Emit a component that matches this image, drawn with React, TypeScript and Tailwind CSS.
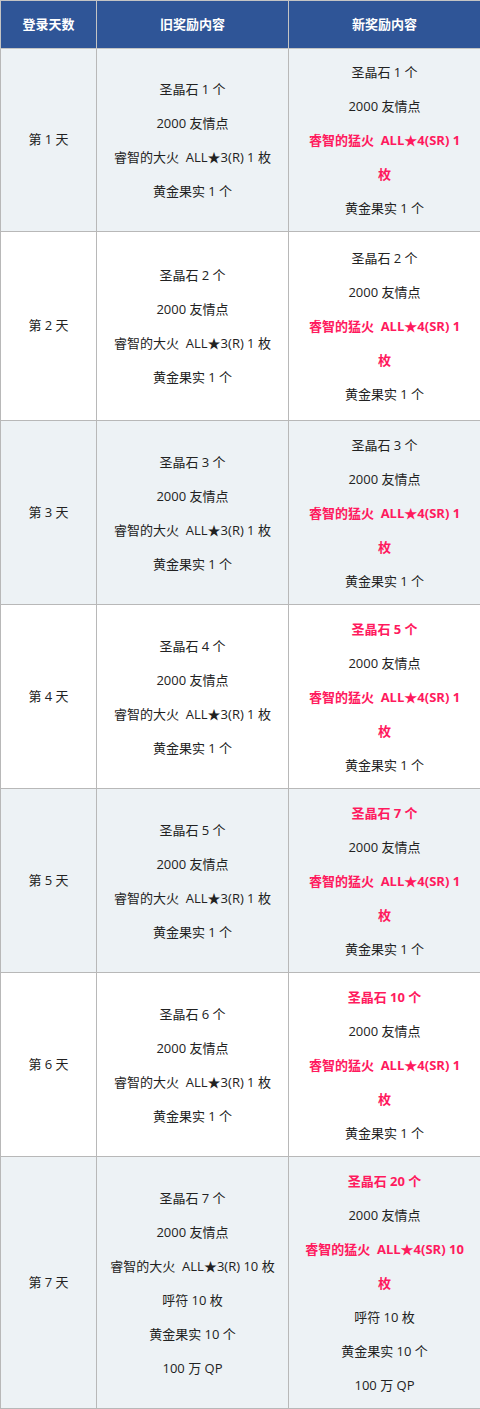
import React from 'react';

type Line = { text: string; red?: boolean };

interface DayRow {
    day: string;
    height: string;
    bg: string;
    oldItems: string[];
    newItems: Line[];
}

const fire3 = (n: number) => `睿智的大火\u00a0\u00a0ALL★3(R) ${n} 枚`;

const rows: DayRow[] = [
    {
        day: '第 1 天',
        height: 'h-[183px]',
        bg: 'bg-[#edf2f5]',
        oldItems: ['圣晶石 1 个', '2000 友情点', fire3(1), '黄金果实 1 个'],
        newItems: [
            { text: '圣晶石 1 个' },
            { text: '2000 友情点' },
            { text: '睿智的猛火\u00a0\u00a0ALL★4(SR) 1', red: true },
            { text: '枚', red: true },
            { text: '黄金果实 1 个' },
        ],
    },
    {
        day: '第 2 天',
        height: 'h-[189px]',
        bg: 'bg-white',
        oldItems: ['圣晶石 2 个', '2000 友情点', fire3(1), '黄金果实 1 个'],
        newItems: [
            { text: '圣晶石 2 个' },
            { text: '2000 友情点' },
            { text: '睿智的猛火\u00a0\u00a0ALL★4(SR) 1', red: true },
            { text: '枚', red: true },
            { text: '黄金果实 1 个' },
        ],
    },
    {
        day: '第 3 天',
        height: 'h-[184px]',
        bg: 'bg-[#edf2f5]',
        oldItems: ['圣晶石 3 个', '2000 友情点', fire3(1), '黄金果实 1 个'],
        newItems: [
            { text: '圣晶石 3 个' },
            { text: '2000 友情点' },
            { text: '睿智的猛火\u00a0\u00a0ALL★4(SR) 1', red: true },
            { text: '枚', red: true },
            { text: '黄金果实 1 个' },
        ],
    },
    {
        day: '第 4 天',
        height: 'h-[184px]',
        bg: 'bg-white',
        oldItems: ['圣晶石 4 个', '2000 友情点', fire3(1), '黄金果实 1 个'],
        newItems: [
            { text: '圣晶石 5 个', red: true },
            { text: '2000 友情点' },
            { text: '睿智的猛火\u00a0\u00a0ALL★4(SR) 1', red: true },
            { text: '枚', red: true },
            { text: '黄金果实 1 个' },
        ],
    },
    {
        day: '第 5 天',
        height: 'h-[184px]',
        bg: 'bg-[#edf2f5]',
        oldItems: ['圣晶石 5 个', '2000 友情点', fire3(1), '黄金果实 1 个'],
        newItems: [
            { text: '圣晶石 7 个', red: true },
            { text: '2000 友情点' },
            { text: '睿智的猛火\u00a0\u00a0ALL★4(SR) 1', red: true },
            { text: '枚', red: true },
            { text: '黄金果实 1 个' },
        ],
    },
    {
        day: '第 6 天',
        height: 'h-[184px]',
        bg: 'bg-white',
        oldItems: ['圣晶石 6 个', '2000 友情点', fire3(1), '黄金果实 1 个'],
        newItems: [
            { text: '圣晶石 10 个', red: true },
            { text: '2000 友情点' },
            { text: '睿智的猛火\u00a0\u00a0ALL★4(SR) 1', red: true },
            { text: '枚', red: true },
            { text: '黄金果实 1 个' },
        ],
    },
    {
        day: '第 7 天',
        height: 'h-[252px]',
        bg: 'bg-[#edf2f5]',
        oldItems: ['圣晶石 7 个', '2000 友情点', fire3(10), '呼符 10 枚', '黄金果实 10 个', '100 万 QP'],
        newItems: [
            { text: '圣晶石 20 个', red: true },
            { text: '2000 友情点' },
            { text: '睿智的猛火\u00a0\u00a0ALL★4(SR) 10', red: true },
            { text: '枚', red: true },
            { text: '呼符 10 枚' },
            { text: '黄金果实 10 个' },
            { text: '100 万 QP' },
        ],
    },
];

export default function App() {
    return (
        <div
            className="w-[480px] bg-white text-[13px] text-[#222]"
            style={{ fontFamily: '"Open Sans", "Noto Sans CJK SC", sans-serif' }}
        >
            <table className="w-full table-fixed border-collapse">
                <colgroup>
                    <col className="w-[96px]" />
                    <col className="w-[192px]" />
                    <col className="w-[192px]" />
                </colgroup>
                <thead>
                    <tr className="h-[48px] bg-[#2f5597] text-white font-bold">
                        <th className="border border-[#c4c4c4] text-center align-middle">登录天数</th>
                        <th className="border border-[#c4c4c4] text-center align-middle">旧奖励内容</th>
                        <th className="border border-[#c4c4c4] text-center align-middle">新奖励内容</th>
                    </tr>
                </thead>
                <tbody>
                    {rows.map(row => (
                        <tr key={row.day} className={`${row.height} ${row.bg}`}>
                            <td className="border border-[#b8b8b8] text-center align-middle">{row.day}</td>
                            <td className="border border-[#b8b8b8] text-center align-middle">
                                {row.oldItems.map(item => (
                                    <div key={item} className="leading-[34px] whitespace-nowrap">{item}</div>
                                ))}
                            </td>
                            <td className="border border-[#b8b8b8] text-center align-middle">
                                {row.newItems.map((item, i) => (
                                    <div
                                        key={i}
                                        className={
                                            item.red
                                                ? 'leading-[34px] whitespace-nowrap font-bold text-[#ff1a5e]'
                                                : 'leading-[34px] whitespace-nowrap'
                                        }
                                    >
                                        {item.text}
                                    </div>
                                ))}
                            </td>
                        </tr>
                    ))}
                </tbody>
            </table>
        </div>
    );
}
